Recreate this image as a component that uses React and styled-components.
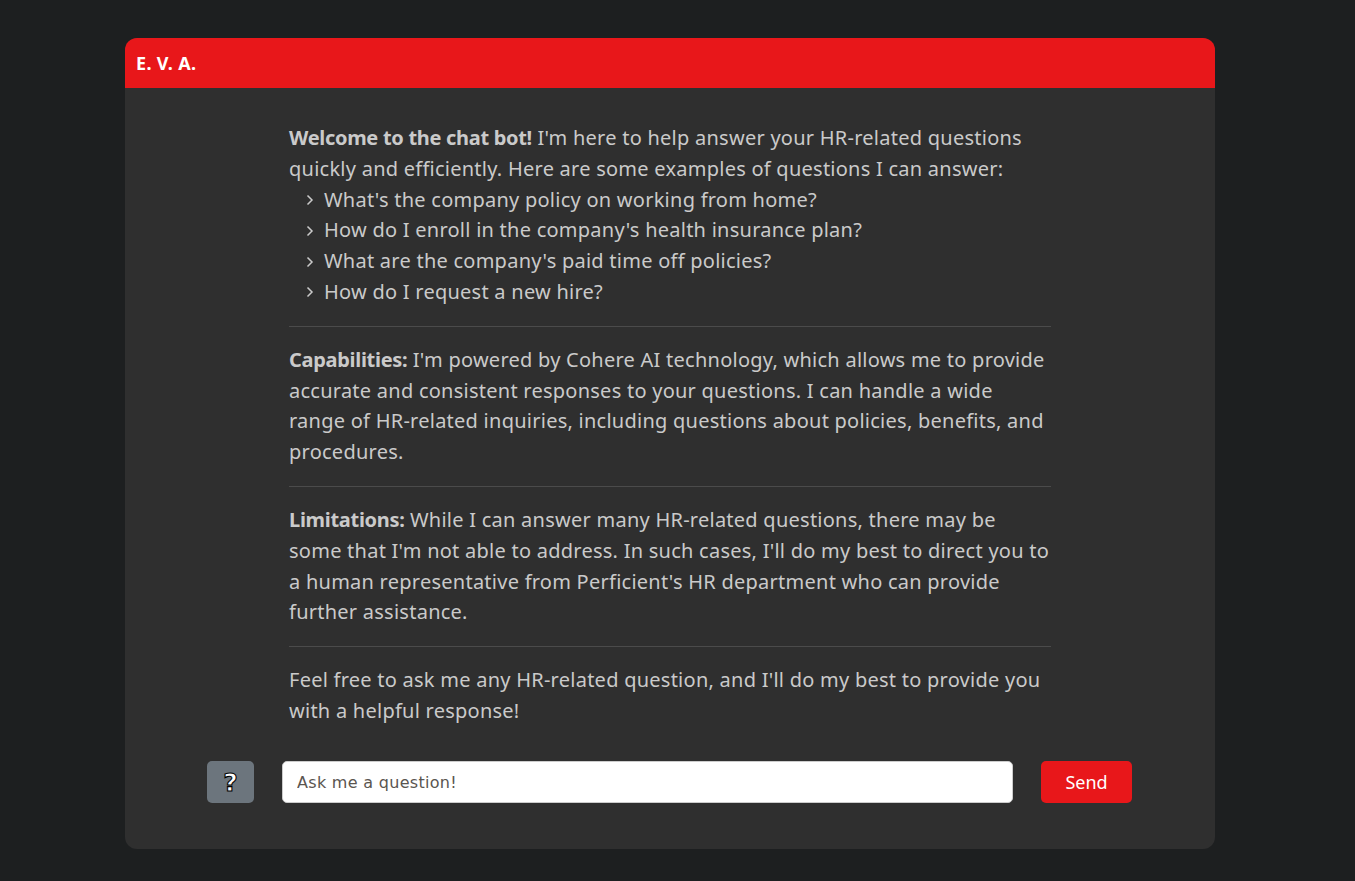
import React from "react";
import styled, { createGlobalStyle } from "styled-components";

const Global = createGlobalStyle`
  html, body { margin: 0; padding: 0; background: #1d1f20; }
  body { font-family: "Noto Sans", "Open Sans", sans-serif; }
`;

const Page = styled.div`
  padding: 38px 0 0 125px;
  min-height: 843px;
  box-sizing: border-box;
`;

const Card = styled.div`
  width: 1090px;
  height: 811px;
  background: #2f2f2f;
  border-radius: 12px;
  overflow: hidden;
  display: flex;
  flex-direction: column;
`;

const Header = styled.div`
  height: 50px;
  background: #e8171a;
  display: flex;
  align-items: center;
  padding-left: 11px;
  color: #fff;
  font-family: "Noto Sans", sans-serif;
  font-weight: 700;
  font-size: 18px;
  letter-spacing: 0.3px;
`;

const Body = styled.div`
  flex: 1;
  display: flex;
  justify-content: center;
  padding-top: 35px;
`;

const Column = styled.div`
  width: 762px;
  color: #cacaca;
  font-size: 20px;
  line-height: 30.8px;
  letter-spacing: 0.25px;
`;

const Section = styled.div`
  padding: ${(p) => p.$pad || "18px 0"};
  border-bottom: ${(p) => (p.$last ? "none" : "1px solid #4b4b4b")};
`;

const P = styled.p`
  margin: 0;
`;

const B = styled.b`
  font-weight: 700;
  letter-spacing: -0.3px;
`;

const List = styled.ul`
  list-style: none;
  margin: 0;
  padding: 0 0 0 15px;
`;

const Item = styled.li`
  display: flex;
  align-items: center;
  gap: 8px;
  height: 30.8px;
`;

const Chev = styled.svg`
  width: 12px;
  height: 12px;
  flex: none;
`;

const InputRow = styled.div`
  display: flex;
  align-items: center;
  gap: 28px;
  padding: 0 83px 46px 82px;
`;

const HelpBtn = styled.button`
  width: 47px;
  height: 42px;
  border: none;
  border-radius: 5px;
  background: #6c757d;
  color: #fff;
  font-size: 25px;
  font-weight: 700;
  font-family: "DejaVu Sans", sans-serif;
  display: flex;
  align-items: center;
  justify-content: center;
  padding: 0;
  -webkit-text-stroke: 1.1px #000;
`;

const Input = styled.input`
  flex: 1;
  height: 42px;
  box-sizing: border-box;
  border: 1px solid #ccc;
  border-radius: 5px;
  background: #fff;
  padding: 0 14px;
  font-family: "DejaVu Sans", sans-serif;
  font-size: 16px;
  letter-spacing: 0.3px;
  color: #333;
  &::placeholder { color: #5a5550; }
  outline: none;
`;

const SendBtn = styled.button`
  width: 91px;
  height: 42px;
  border: none;
  border-radius: 5px;
  background: #e8171a;
  color: #fff;
  font-family: "Noto Sans", sans-serif;
  font-size: 18px;
  padding: 0;
`;

const Chevron = () => (
  <Chev viewBox="0 0 12 12">
    <path d="M3.5 1.5 L8 6 L3.5 10.5" fill="none" stroke="#cacaca" strokeWidth="1.5" />
  </Chev>
);

const examples = [
  "What's the company policy on working from home?",
  "How do I enroll in the company's health insurance plan?",
  "What are the company's paid time off policies?",
  "How do I request a new hire?",
];

export default function App() {
  return (
    <>
      <Global />
      <Page>
        <Card>
          <Header>E. V. A.</Header>
          <Body>
            <Column>
              <Section $pad="0 0 18px">
                <P>
                  <B>Welcome to the chat bot!</B> I'm here to help answer your HR-related questions
                  quickly and efficiently. Here are some examples of questions I can answer:
                </P>
                <List>
                  {examples.map((e) => (
                    <Item key={e}>
                      <Chevron />
                      {e}
                    </Item>
                  ))}
                </List>
              </Section>
              <Section>
                <P>
                  <B>Capabilities:</B> I'm powered by Cohere AI technology, which allows me to provide
                  accurate and consistent responses to your questions. I can handle a wide range of
                  HR-related inquiries, including questions about policies, benefits, and procedures.
                </P>
              </Section>
              <Section>
                <P>
                  <B>Limitations:</B> While I can answer many HR-related questions, there may be some
                  that I'm not able to address. In such cases, I'll do my best to direct you to a human
                  representative from Perficient's HR department who can provide further assistance.
                </P>
              </Section>
              <Section $last>
                <P>
                  Feel free to ask me any HR-related question, and I'll do my best to provide you with
                  a helpful response!
                </P>
              </Section>
            </Column>
          </Body>
          <InputRow>
            <HelpBtn>?</HelpBtn>
            <Input placeholder="Ask me a question!" />
            <SendBtn>Send</SendBtn>
          </InputRow>
        </Card>
      </Page>
    </>
  );
}
